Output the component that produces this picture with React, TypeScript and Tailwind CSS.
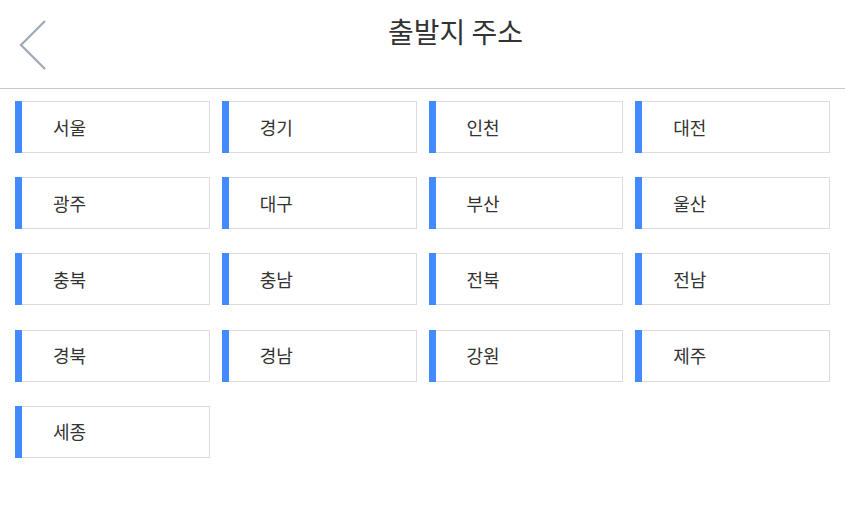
const regions = [
  '서울', '경기', '인천', '대전',
  '광주', '대구', '부산', '울산',
  '충북', '충남', '전북', '전남',
  '경북', '경남', '강원', '제주',
  '세종',
]

export default function App() {
  return (
    <div
      className="w-[845px] h-[529px] bg-white text-[#333]"
      style={{ fontFamily: '"Noto Sans CJK KR", "Noto Sans", sans-serif' }}
    >
      {/* Header */}
      <div className="flex h-[89px] items-start border-b border-[#c8c8c8]">
        <button className="flex h-[88px] w-[66px] items-start pl-[19px] pt-[20px]">
          <svg width="28" height="50" viewBox="0 0 28 50" fill="none">
            <path d="M26 1 L2 25 L26 49" stroke="#9ea8b6" strokeWidth="2.2" />
          </svg>
        </button>
        <h1 className="flex-1 pt-[11px] text-center text-[28px] leading-[40px] font-normal text-[#333]">
          출발지 주소
        </h1>
      </div>

      {/* Region grid */}
      <div className="grid grid-cols-4 gap-x-[12px] gap-y-[24.2px] px-[15px] pt-[12px]">
        {regions.map((r) => (
          <div
            key={r}
            className="flex h-[52px] items-center border border-l-0 border-[#dcdcdc] bg-white"
          >
            <div className="h-[52px] w-[7px] -my-px bg-[#448aff]" />
            <span className="pl-[31px] text-[18px]">{r}</span>
          </div>
        ))}
      </div>
    </div>
  )
}
